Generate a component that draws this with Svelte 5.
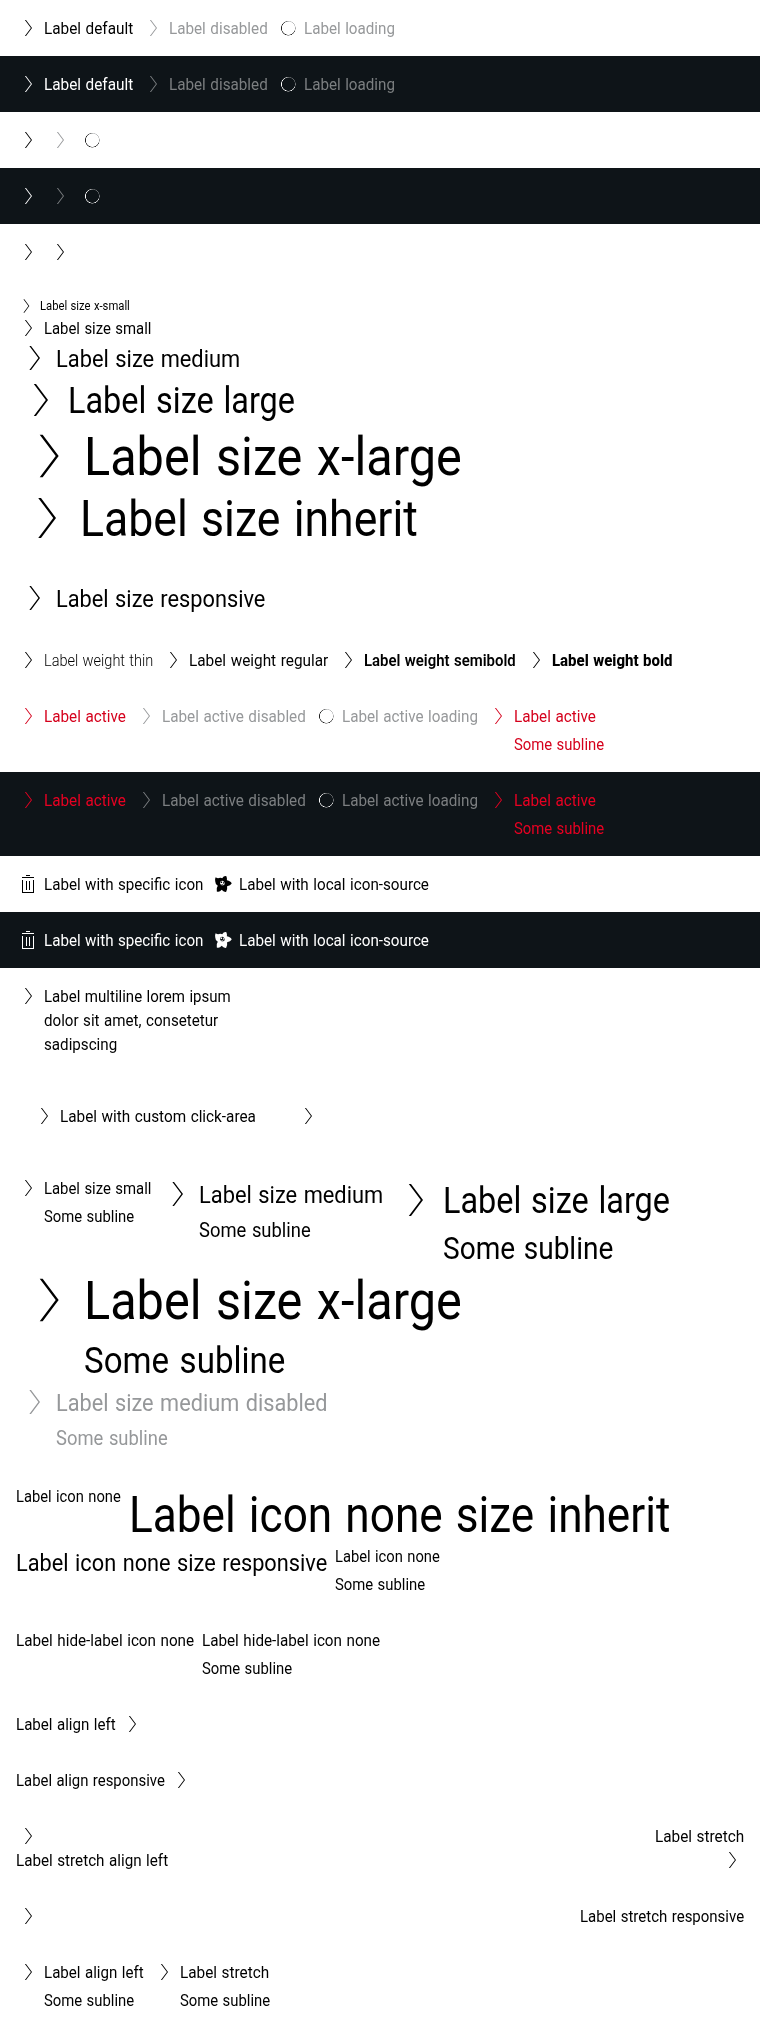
<script>
  import { onMount } from 'svelte';

  // Every link entry: l = label lines as [text, width], s = subline, z = size, i = icon, st = state
  const sm = (text, w, o = {}) => ({ l: [[text, w]], z: 'small', i: 'arrow', ...o });
  const sub = (w) => ['Some subline', w];
  const icon = (o = {}) => ({ l: [], z: 'small', i: 'arrow', ...o });
  const off = { st: 'disabled' };
  const load = { st: 'disabled', i: 'spinner' };
  const act = { st: 'active' };

  const basic = [sm('Label default', 89), sm('Label disabled', 99, off), sm('Label loading', 91, load)];
  const hidden = [icon(), icon(off), icon(load)];
  const active = [
    sm('Label active', 82, act),
    sm('Label active disabled', 144, off),
    sm('Label active loading', 136, load),
    sm('Label active', 82, { ...act, s: sub(90) })
  ];
  const sources = [
    sm('Label with specific icon', 159, { i: 'trash' }),
    sm('Label with local icon-source', 190, { i: 'star' })
  ];
  const none = { i: 'none' };

  const blocks = [
    { rows: [basic] },
    { dark: true, rows: [basic] },
    { rows: [hidden] },
    { dark: true, rows: [hidden] },
    { rows: [[icon(), icon()]] },
    {
      rows: [
        [sm('Label size x-small', 90, { z: 'x-small' })],
        [sm('Label size small', 107)],
        [sm('Label size medium', 184, { z: 'medium' })],
        [sm('Label size large', 227, { z: 'large' })],
        [sm('Label size x-large', 378, { z: 'x-large' })],
        [sm('Label size inherit', 338, { z: 'inherit' })]
      ]
    },
    { rows: [[sm('Label size responsive', 209, { z: 'medium' })]] },
    {
      rows: [[
        sm('Label weight thin', 109, { wt: 300 }),
        sm('Label weight regular', 139),
        sm('Label weight semibold', 152, { wt: 600 }),
        sm('Label weight bold', 120, { wt: 800 })
      ]]
    },
    { rows: [active] },
    { dark: true, rows: [active] },
    { rows: [sources] },
    { dark: true, rows: [sources] },
    {
      rows: [[{
        l: [['Label multiline lorem ipsum', 187], ['dolor sit amet, consetetur', 174], ['sadipscing', 73]],
        z: 'small', i: 'arrow'
      }]]
    },
    { rows: [[sm('Label with custom click-area', 196, { area: true }), icon({ area: true })]] },
    {
      rows: [
        [
          sm('Label size small', 107, { s: sub(90) }),
          sm('Label size medium', 184, { z: 'medium', s: sub(112) }),
          sm('Label size large', 227, { z: 'large', s: sub(170) })
        ],
        [sm('Label size x-large', 378, { z: 'x-large', s: sub(201) })],
        [sm('Label size medium disabled', 272, { z: 'medium', ...off, s: sub(112) })]
      ]
    },
    {
      rows: [
        [sm('Label icon none', 105, none), sm('Label icon none size inherit', 541, { ...none, z: 'inherit' })],
        [
          sm('Label icon none size responsive', 311, { ...none, z: 'medium' }),
          sm('Label icon none', 105, { ...none, s: sub(90) })
        ]
      ]
    },
    {
      rows: [[
        sm('Label hide-label icon none', 178, none),
        sm('Label hide-label icon none', 178, { ...none, s: sub(90) })
      ]]
    },
    { rows: [[sm('Label align left', 100, { left: true })]] },
    { rows: [[sm('Label align responsive', 149, { left: true })]] },
    {
      rows: [
        [sm('Label stretch', 89, { stretch: true })],
        [sm('Label stretch align left', 152, { stretch: true, left: true })]
      ]
    },
    { rows: [[sm('Label stretch responsive', 164, { stretch: true })]] },
    { rows: [[sm('Label align left', 100, { s: sub(90) }), sm('Label stretch', 89, { s: sub(90) })]] }
  ];

  let page;

  // Condenses each line of text to the width that its column reserves
  onMount(() => {
    for (const el of page.querySelectorAll('.text')) {
      const inner = el.firstElementChild;
      inner.style.transform = `scaleX(${el.clientWidth / inner.offsetWidth})`;
    }
  });
</script>

{#snippet glyph(name)}
  {#if name === 'arrow'}
    <svg class="icon" viewBox="0 0 24 24" aria-hidden="true">
      <path fill="currentColor" d="M8.9 4H10l6 8-6 8H8.9l6-8z" />
    </svg>
  {:else if name === 'trash'}
    <svg class="icon" viewBox="0 0 24 24" aria-hidden="true">
      <path fill="currentColor" d="M10 3h4v1h-4zM6 5h12v1H6zM6 8h1v12h10V8h1v13H6zM10 9h1v9h-1zM13 9h1v9h-1z" />
    </svg>
  {:else if name === 'star'}
    <svg class="icon" viewBox="0 0 24 24" aria-hidden="true">
      <path
        fill="currentColor"
        fill-rule="evenodd"
        d="M11.2 6.2Q13 3.4 15.4 4.2Q16.2 6 15.9 8.3Q19.8 9.1 20.7 11.5Q19.5 13.7 16.1 14.3Q16.6 17.8 15.2 19.8Q12.6 20.3 10.7 17.8Q8.4 20.4 5.8 19.4Q4.9 16.3 6.8 13.7Q4.1 11.7 4.2 9.2Q3.7 7 4.7 5.3Q6.5 6.5 8 6.1Q9.8 5.6 11.2 6.2zM9 10.2Q8.7 12.4 10.6 13.3Q12.9 13.8 13.8 12Q14.1 9.7 12.1 8.9Q9.8 8.6 9 10.2z"
      />
      <path fill="currentColor" d="M9.6 9.6h1.5v1.5H9.6zM12 10.3h1.4v1.2H12zM10 12l2.5.7-.9.7z" />
    </svg>
  {:else if name === 'spinner'}
    <span class="icon spinner"><i></i></span>
  {/if}
{/snippet}

{#snippet line(text, width)}
  <span class="text" style="width:{width}px"><span>{text}</span></span>
{/snippet}

<main bind:this={page}>
  {#each blocks as block}
    <section class:dark={block.dark}>
      {#each block.rows as row}
        <div class="row">
          {#each row as item}
            <div
              class="link {item.z} {item.st ?? ''}"
              class:left={item.left}
              class:stretch={item.stretch}
              class:area={item.area}
              style:font-weight={item.wt}
            >
              {@render glyph(item.i)}
              {#if item.l.length}
                <div class="content">
                  {#each item.l as [text, width]}
                    {@render line(text, width)}
                  {/each}
                  {#if item.s}
                    <div class="subline">{@render line(item.s[0], item.s[1])}</div>
                  {/if}
                </div>
              {/if}
            </div>
          {/each}
        </div>
      {/each}
    </section>
  {/each}
</main>

<style>
  :global(body) {
    margin: 0;
    background: #fff;
  }

  main {
    font-family: Roboto, 'Liberation Sans', sans-serif;
    color: #000;
  }

  section {
    padding: 16px;
    --muted: #96989a;
    --accent: #d5001c;
  }

  .dark {
    background: #0e1418;
    color: #fff;
    --muted: #7c7f81;
    --accent: #e80022;
  }

  .row {
    display: flex;
    align-items: flex-start;
    gap: 8px;
  }

  .link {
    --lh: 24px;
    --fs: 16px;
    --sub-lh: 24px;
    --sub-fs: 16px;
    display: flex;
    align-items: flex-start;
    gap: 4px;
    font-size: var(--fs);
    line-height: var(--lh);
    word-spacing: 0.05em;
  }

  .x-small { --fs: 12px; --lh: 20px; }
  .medium { --fs: 24.7px; --lh: 36px; --sub-fs: 20.5px; --sub-lh: 28px; }
  .large { --fs: 37px; --lh: 48px; --sub-fs: 31px; --sub-lh: 40px; }
  .x-large { --fs: 54px; --lh: 64px; --sub-fs: 37px; --sub-lh: 48px; }
  .inherit { --fs: 50px; --lh: 60px; }

  .disabled { color: var(--muted); }
  .active { color: var(--accent); }
  .left { flex-direction: row-reverse; }
  .area { padding: 16px; }

  .stretch {
    flex: 1;
    justify-content: space-between;
  }

  .icon {
    display: block;
    flex: none;
    width: var(--lh);
    height: var(--lh);
  }

  .spinner {
    display: grid;
    place-items: center;
    color: #222;
  }

  .dark .spinner { color: #fff; }

  .spinner i {
    width: 16px;
    height: 16px;
    border-radius: 50%;
    background: conic-gradient(from 10deg, rgb(150 152 154 / 0.5), rgb(150 152 154 / 0.7) 60deg, currentColor 120deg, currentColor 290deg, rgb(150 152 154 / 0.8));
    mask: radial-gradient(circle at 8.4px 8.2px, transparent 6.3px, #000 6.9px, #000 7px, transparent 7.6px);
  }

  .text {
    display: block;
    height: var(--lh);
    white-space: nowrap;
  }

  .text > span {
    display: inline-block;
    position: relative;
    top: 1px;
    transform-origin: 0 50%;
  }

  .x-small .text > span { top: 0; }

  .subline {
    margin-top: 4px;
    font-size: var(--sub-fs);
    line-height: var(--sub-lh);
  }

  .subline .text { height: var(--sub-lh); }
  .medium .subline .text > span { top: 0; }
</style>
